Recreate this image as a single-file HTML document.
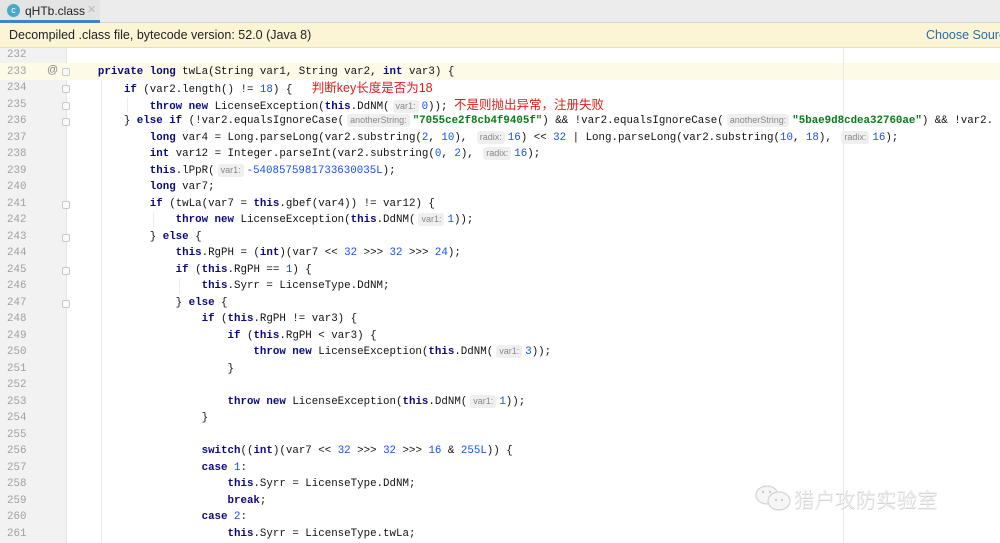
<!DOCTYPE html>
<html><head><meta charset="utf-8"><style>
*{margin:0;padding:0;box-sizing:border-box}
body{width:1000px;height:543px;overflow:hidden;background:#fff;position:relative;font-family:"Liberation Sans","Noto Sans CJK SC",sans-serif}
.tabbar{position:absolute;left:0;top:0;width:1000px;height:23px;background:#ececec;border-bottom:1px solid #d6d6d6}
.tab{position:absolute;left:0;top:0;width:100px;height:23px;background:#e4e4e4;border-bottom:3px solid #4083c9;font-size:12px;color:#222}
.tab .ic{position:absolute;left:7px;top:4px;width:13px;height:13px;border-radius:50%;background:#4aa7c9;color:#fff;font-size:9px;line-height:13px;text-align:center}
.tab .t{position:absolute;left:25px;top:4px}
.tab .x{position:absolute;left:87px;top:3px;color:#bbb;font-size:11px}
.banner{position:absolute;left:0;top:23px;width:1000px;height:25px;background:#fbf5d6;border-bottom:1px solid #e6dfb8;font-size:12.5px;color:#222}
.banner .l{position:absolute;left:9px;top:5px}
.banner .r{position:absolute;left:926px;top:5px;color:#2d6aa6;white-space:nowrap}
.gutter{position:absolute;left:0;top:48px;width:67px;height:495px;background:#f2f2f2;border-right:1px solid #e4e4e4}
.cur{position:absolute;left:0;top:63px;width:1000px;height:16.5px;background:#fdfae8}
.margin{position:absolute;left:843px;top:48px;width:1px;height:495px;background:#e8e8e8}
.ln{position:absolute;left:7px;font-family:"Liberation Mono",monospace;font-size:10.8px;color:#a0a0a0;line-height:16.5px}
.code{position:absolute;left:72px;font-family:"Liberation Mono",monospace;font-size:10.8px;color:#111;white-space:pre;line-height:16.5px}
.k{color:#0a0a80;font-weight:bold}
.n{color:#1750eb}
.s{color:#067d17;font-weight:bold}
.h{display:inline-block;font-family:"Liberation Sans",sans-serif;font-size:9px;color:#888;background:#efefef;border-radius:3px;padding:0 3px;margin:0 3px;line-height:13px}
.cn{font-family:"Liberation Sans","Noto Sans CJK SC",sans-serif;color:#e31b1b;font-size:12.5px}
.fold{position:absolute;left:62px;width:8px;height:8px;border:1px solid #c8c8c8;border-radius:2px;background:#fafafa}
.guide{position:absolute;width:1px;background:#ececec}
.wm{position:absolute;left:794px;top:484px;font-size:20px;color:#f3f3f3;text-shadow:0 1px 0 #d0d0d0,1px 0 0 #dcdcdc;letter-spacing:0.5px;font-weight:300}
.wmi{position:absolute;left:754px;top:484px;width:38px;height:28px}
</style></head><body>
<div class="tabbar"><div class="tab"><span class="ic">c</span><span class="t">qHTb.class</span><span class="x">✕</span></div></div>
<div class="banner"><span class="l">Decompiled .class file, bytecode version: 52.0 (Java 8)</span><span class="r">Choose Sources...</span></div>
<div class="gutter"></div>
<div class="cur"></div>
<div class="margin"></div>
<div class="guide" style="left:101px;top:80px;height:463px"></div>
<div class="guide" style="left:127px;top:97px;height:16px"></div>
<div class="guide" style="left:153px;top:212px;height:16px"></div>
<div class="guide" style="left:179px;top:278px;height:16px"></div>
<svg class="wmi" viewBox="0 0 38 28"><ellipse cx="13" cy="11" rx="11" ry="9" fill="#f6f6f6" stroke="#d4d4d4" stroke-width="1.2"/><ellipse cx="25" cy="17" rx="11" ry="9" fill="#f6f6f6" stroke="#d4d4d4" stroke-width="1.2"/><circle cx="9" cy="8" r="1.2" fill="#ccc"/><circle cx="16" cy="8" r="1.2" fill="#ccc"/><circle cx="22" cy="16" r="1.2" fill="#ccc"/><circle cx="28" cy="16" r="1.2" fill="#ccc"/></svg>
<div class="wm">猎户攻防实验室</div>
<div style="position:absolute;left:47px;top:64px;font-size:11px;color:#888">@</div>
<div class="fold" style="top:68px"></div><div class="fold" style="top:85px"></div><div class="fold" style="top:102px"></div><div class="fold" style="top:118px"></div><div class="fold" style="top:201px"></div><div class="fold" style="top:234px"></div><div class="fold" style="top:267px"></div><div class="fold" style="top:300px"></div>
<div id="L"></div>
<script>
var lines=[
"",
"    <span class=k>private long</span> twLa(String var1, String var2, <span class=k>int</span> var3) {",
"        <span class=k>if</span> (var2.length() != <span class=n>18</span>) {   <span class=cn>判断key长度是否为18</span>",
"            <span class=k>throw new</span> LicenseException(<span class=k>this</span>.DdNM(<span class=h>var1:</span><span class=n>0</span>)); <span class=cn>不是则抛出异常，注册失败</span>",
"        } <span class=k>else if</span> (!var2.equalsIgnoreCase(<span class=h>anotherString:</span><span class=s>\"7055ce2f8cb4f9405f\"</span>) &amp;&amp; !var2.equalsIgnoreCase(<span class=h>anotherString:</span><span class=s>\"5bae9d8cdea32760ae\"</span>) &amp;&amp; !var2.",
"            <span class=k>long</span> var4 = Long.parseLong(var2.substring(<span class=n>2</span>, <span class=n>10</span>), <span class=h>radix:</span><span class=n>16</span>) &lt;&lt; <span class=n>32</span> | Long.parseLong(var2.substring(<span class=n>10</span>, <span class=n>18</span>), <span class=h>radix:</span><span class=n>16</span>);",
"            <span class=k>int</span> var12 = Integer.parseInt(var2.substring(<span class=n>0</span>, <span class=n>2</span>), <span class=h>radix:</span><span class=n>16</span>);",
"            <span class=k>this</span>.lPpR(<span class=h>var1:</span><span class=n>-5408575981733630035L</span>);",
"            <span class=k>long</span> var7;",
"            <span class=k>if</span> (twLa(var7 = <span class=k>this</span>.gbef(var4)) != var12) {",
"                <span class=k>throw new</span> LicenseException(<span class=k>this</span>.DdNM(<span class=h>var1:</span><span class=n>1</span>));",
"            } <span class=k>else</span> {",
"                <span class=k>this</span>.RgPH = (<span class=k>int</span>)(var7 &lt;&lt; <span class=n>32</span> &gt;&gt;&gt; <span class=n>32</span> &gt;&gt;&gt; <span class=n>24</span>);",
"                <span class=k>if</span> (<span class=k>this</span>.RgPH == <span class=n>1</span>) {",
"                    <span class=k>this</span>.Syrr = LicenseType.DdNM;",
"                } <span class=k>else</span> {",
"                    <span class=k>if</span> (<span class=k>this</span>.RgPH != var3) {",
"                        <span class=k>if</span> (<span class=k>this</span>.RgPH &lt; var3) {",
"                            <span class=k>throw new</span> LicenseException(<span class=k>this</span>.DdNM(<span class=h>var1:</span><span class=n>3</span>));",
"                        }",
"",
"                        <span class=k>throw new</span> LicenseException(<span class=k>this</span>.DdNM(<span class=h>var1:</span><span class=n>1</span>));",
"                    }",
"",
"                    <span class=k>switch</span>((<span class=k>int</span>)(var7 &lt;&lt; <span class=n>32</span> &gt;&gt;&gt; <span class=n>32</span> &gt;&gt;&gt; <span class=n>16</span> &amp; <span class=n>255L</span>)) {",
"                    <span class=k>case</span> <span class=n>1</span>:",
"                        <span class=k>this</span>.Syrr = LicenseType.DdNM;",
"                        <span class=k>break</span>;",
"                    <span class=k>case</span> <span class=n>2</span>:",
"                        <span class=k>this</span>.Syrr = LicenseType.twLa;"
];
var h="";
for(var i=0;i<lines.length;i++){var t=47+i*16.5;
h+='<div class="ln" style="top:'+t+'px">'+(232+i)+'</div><div class="code" style="top:'+t+'px">'+lines[i]+'</div>';}
document.getElementById("L").innerHTML=h;
</script>
</body></html>
